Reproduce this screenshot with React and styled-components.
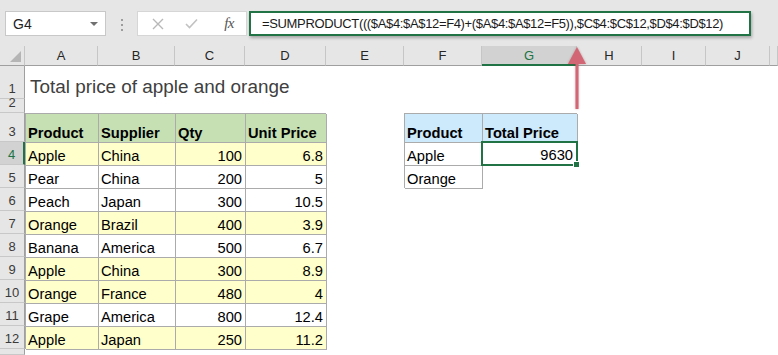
import React from "react";
import styled, { createGlobalStyle, css } from "styled-components";

const GREEN = "#217346";
const LINE = "#ababab";

const GlobalStyle = createGlobalStyle`
  body {
    margin: 0;
    background: #fff;
    font-family: "Liberation Sans", Arial, sans-serif;
  }
`;

const Window = styled.div`
  position: relative;
  width: 778px;
  height: 355px;
  overflow: hidden;
  background: #fff;
`;

const Toolbar = styled.div`
  display: flex;
  align-items: flex-start;
  height: 46px;
  box-sizing: border-box;
  padding: 11px 0 0 5px;
  background: #e6e6e6;
`;

const NameBox = styled.div`
  display: flex;
  align-items: center;
  justify-content: space-between;
  box-sizing: border-box;
  width: 101px;
  height: 25px;
  padding: 0 7px 0 7px;
  background: #fff;
  border: 1px solid #c8c8c8;
  font-size: 14px;
  color: #222;
`;

const Caret = styled.span`
  width: 0;
  height: 0;
  border-left: 4px solid transparent;
  border-right: 4px solid transparent;
  border-top: 4px solid #707070;
`;

const Dots = styled.div`
  display: flex;
  flex-direction: column;
  gap: 3px;
  margin: 8px 14px 0 15px;
  span {
    width: 2px;
    height: 2px;
    background: #9c9c9c;
  }
`;

const FxBox = styled.div`
  display: grid;
  grid-template-columns: 40px 27px 1fr;
  align-items: center;
  justify-items: center;
  box-sizing: border-box;
  width: 110px;
  height: 25px;
  padding-right: 12px;
  background: #fff;
  border: 1px solid #d6d6d6;
`;

const Fx = styled.span`
  justify-self: end;
  font-family: "Liberation Serif", "Times New Roman", serif;
  font-style: italic;
  font-size: 15px;
  color: #555;
  letter-spacing: -0.5px;
`;

const FormulaBox = styled.div`
  display: flex;
  align-items: center;
  box-sizing: border-box;
  width: 502px;
  height: 25px;
  margin-left: 2px;
  padding-left: 11px;
  background: #fff;
  border: 2px solid ${GREEN};
  box-shadow: 1px 2px 3px rgba(0, 0, 0, 0.28);
  font-size: 13px;
  letter-spacing: -0.35px;
  color: #1a1a1a;
  white-space: nowrap;
`;

const Sheet = styled.div`
  display: grid;
  grid-template-columns: 25px 73px 77px 70px 81px 78px 78px 95px 65px 64px 64px 1fr;
  grid-template-rows: 20px 33px 14px 29px repeat(9, 23px) 1fr;
  height: 309px;
`;

const Corner = styled.div`
  position: relative;
  box-sizing: border-box;
  background: #e6e6e6;
  border-right: 1px solid #c6c6c6;
  border-bottom: 1px solid #9f9f9f;
  &::after {
    content: "";
    position: absolute;
    right: 3px;
    bottom: 3px;
    border-left: 11px solid transparent;
    border-bottom: 11px solid #b5b5b5;
  }
`;

const ColHead = styled.div`
  display: flex;
  align-items: center;
  justify-content: center;
  box-sizing: border-box;
  background: ${(p) => (p.$active ? "#d2d2d2" : "#e6e6e6")};
  border-right: 1px solid #c6c6c6;
  border-bottom: ${(p) => (p.$active ? `2px solid ${GREEN}` : "1px solid #9f9f9f")};
  font-size: 13px;
  color: ${(p) => (p.$active ? GREEN : "#262626")};
`;

const RowHead = styled.div`
  display: flex;
  align-items: flex-end;
  justify-content: center;
  box-sizing: border-box;
  padding-bottom: 3px;
  background: ${(p) => (p.$active ? "#d2d2d2" : "#e6e6e6")};
  border-right: ${(p) => (p.$active ? `2px solid ${GREEN}` : "1px solid #9f9f9f")};
  border-bottom: 1px solid #c8c8c8;
  font-size: 13px;
  line-height: 12px;
  color: ${(p) => (p.$active ? GREEN : "#3a3a3a")};
`;

const Cell = styled.div`
  position: relative;
  display: flex;
  align-items: flex-end;
  justify-content: ${(p) => (p.$right ? "flex-end" : "flex-start")};
  box-sizing: border-box;
  min-width: 0;
  padding: 0 3px 0 3px;
  background: ${(p) => p.$bg || "transparent"};
  font-size: 14.7px;
  line-height: 17px;
  font-weight: ${(p) => (p.$bold ? 700 : 400)};
  color: #000;
  white-space: nowrap;
  ${(p) =>
    p.$border &&
    css`
      box-shadow: inset 1px 1px 0 ${LINE}, 1px 1px 0 ${LINE};
    `}
  ${(p) =>
    p.$selected &&
    css`
      z-index: 2;
      margin: -1px -1px -1px -1px;
      padding-right: 3px;
      border: 2px solid ${GREEN};
      &::after {
        content: "";
        position: absolute;
        right: -4px;
        bottom: -4px;
        width: 5px;
        height: 5px;
        background: ${GREEN};
        border: 1px solid #fff;
      }
    `}
`;

const Title = styled.div`
  display: flex;
  align-items: flex-end;
  padding: 0 0 1px 5px;
  font-size: 18.9px;
  color: #404040;
  white-space: nowrap;
  overflow: visible;
  z-index: 1;
`;

const Arrow = styled.svg`
  position: absolute;
  left: 566px;
  top: 45px;
  filter: drop-shadow(0 0 1px rgba(120, 40, 50, 0.35));
`;

const COLS = ["A", "B", "C", "D", "E", "F", "G", "H", "I", "J", ""];

const data = [
  ["Apple", "China", 100, "6.8", true],
  ["Pear", "China", 200, "5", false],
  ["Peach", "Japan", 300, "10.5", false],
  ["Orange", "Brazil", 400, "3.9", true],
  ["Banana", "America", 500, "6.7", false],
  ["Apple", "China", 300, "8.9", true],
  ["Orange", "France", 480, "4", true],
  ["Grape", "America", 800, "12.4", false],
  ["Apple", "Japan", 250, "11.2", true],
];

const blanks = (n, key) =>
  Array.from({ length: n }, (_, i) => <Cell key={`${key}-${i}`} />);

function App() {
  const rows = [];

  rows.push(<RowHead key="r1">1</RowHead>);
  rows.push(<Title key="t">Total price of apple and orange</Title>);
  rows.push(...blanks(10, "b1"));

  rows.push(<RowHead key="r2">2</RowHead>);
  rows.push(...blanks(11, "b2"));

  rows.push(<RowHead key="r3">3</RowHead>);
  ["Product", "Supplier", "Qty", "Unit Price"].forEach((h) =>
    rows.push(
      <Cell key={`h-${h}`} $border $bold $bg="#c6e0b4">
        {h}
      </Cell>
    )
  );
  rows.push(<Cell key="e3" />);
  rows.push(
    <Cell key="f3" $border $bold $bg="#cdeafd">
      Product
    </Cell>
  );
  rows.push(
    <Cell key="g3" $border $bold $bg="#cdeafd">
      Total Price
    </Cell>
  );
  rows.push(...blanks(4, "b3"));

  data.forEach(([name, country, qty, price, hit], i) => {
    const r = i + 4;
    const bg = hit ? "#ffffcc" : "#fff";
    rows.push(
      <RowHead key={`r${r}`} $active={r === 4}>
        {r}
      </RowHead>
    );
    rows.push(
      <Cell key={`a${r}`} $border $bg={bg}>
        {name}
      </Cell>
    );
    rows.push(
      <Cell key={`b${r}`} $border $bg={bg}>
        {country}
      </Cell>
    );
    rows.push(
      <Cell key={`c${r}`} $border $right $bg={bg}>
        {qty}
      </Cell>
    );
    rows.push(
      <Cell key={`d${r}`} $border $right $bg={bg}>
        {price}
      </Cell>
    );
    rows.push(<Cell key={`e${r}`} />);
    if (r === 4) {
      rows.push(
        <Cell key="f4" $border $bg="#fff">
          Apple
        </Cell>
      );
      rows.push(
        <Cell key="g4" $selected $right $bg="#fff">
          9630
        </Cell>
      );
    } else if (r === 5) {
      rows.push(
        <Cell key="f5" $border $bg="#fff">
          Orange
        </Cell>
      );
      rows.push(<Cell key="g5" />);
    } else {
      rows.push(...blanks(2, `fg${r}`));
    }
    rows.push(...blanks(4, `hk${r}`));
  });

  // row 13 is only a sliver at the bottom edge, its label is not visible
  rows.push(<RowHead key="r13" />);
  rows.push(...blanks(11, "b13"));

  return (
    <Window>
      <GlobalStyle />
      <Toolbar>
        <NameBox>
          G4
          <Caret />
        </NameBox>
        <Dots>
          <span />
          <span />
          <span />
        </Dots>
        <FxBox>
          <svg width="12" height="12" viewBox="0 0 12 12">
            <path d="M1 1 L11 11 M11 1 L1 11" stroke="#b8b8b8" strokeWidth="1.4" fill="none" />
          </svg>
          <svg width="13" height="11" viewBox="0 0 13 11">
            <path d="M1 6 L4.5 9.5 L12 1.5" stroke="#c2c2c2" strokeWidth="1.6" fill="none" />
          </svg>
          <Fx>fx</Fx>
        </FxBox>
        <FormulaBox>
          =SUMPRODUCT((($A$4:$A$12=F4)+($A$4:$A$12=F5)),$C$4:$C$12,$D$4:$D$12)
        </FormulaBox>
      </Toolbar>
      <Sheet>
        <Corner />
        {COLS.map((c, i) => (
          <ColHead key={`col${i}`} $active={c === "G"}>
            {c}
          </ColHead>
        ))}
        {rows}
      </Sheet>
      <Arrow width="22" height="65" viewBox="0 0 22 65">
        <rect x="9.5" y="14" width="3" height="50" fill="#d36674" />
        <polygon points="11,2 2,19 20,19" fill="#d36674" />
      </Arrow>
    </Window>
  );
}

export default App;
